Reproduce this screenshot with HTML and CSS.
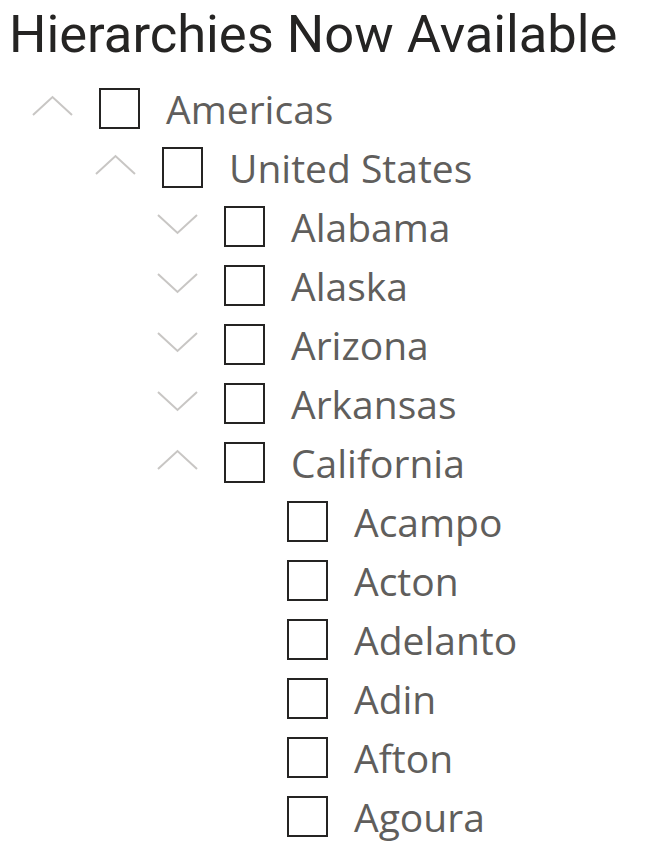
FILE: index.html
```html
<!DOCTYPE html>
<html lang="en">

<head>
    <meta charset="UTF-8">
    <title>Hierarchies Now Available</title>
    <link rel="stylesheet" href="styles.css">
</head>

<body>
    <h1 class="title">Hierarchies Now Available</h1>

    <div class="tree">
        <div class="node level-0">
            <svg class="chevron" viewBox="0 0 41 22"><polyline points="1,20 20.5,2 40,20" /></svg>
            <span class="box"></span>
            <span class="label">Americas</span>
        </div>
        <div class="node level-1">
            <svg class="chevron" viewBox="0 0 41 22"><polyline points="1,20 20.5,2 40,20" /></svg>
            <span class="box"></span>
            <span class="label">United States</span>
        </div>
        <div class="node level-2">
            <svg class="chevron" viewBox="0 0 41 22"><polyline points="1,2 20.5,20 40,2" /></svg>
            <span class="box"></span>
            <span class="label">Alabama</span>
        </div>
        <div class="node level-2">
            <svg class="chevron" viewBox="0 0 41 22"><polyline points="1,2 20.5,20 40,2" /></svg>
            <span class="box"></span>
            <span class="label">Alaska</span>
        </div>
        <div class="node level-2">
            <svg class="chevron" viewBox="0 0 41 22"><polyline points="1,2 20.5,20 40,2" /></svg>
            <span class="box"></span>
            <span class="label">Arizona</span>
        </div>
        <div class="node level-2">
            <svg class="chevron" viewBox="0 0 41 22"><polyline points="1,2 20.5,20 40,2" /></svg>
            <span class="box"></span>
            <span class="label">Arkansas</span>
        </div>
        <div class="node level-2">
            <svg class="chevron" viewBox="0 0 41 22"><polyline points="1,20 20.5,2 40,20" /></svg>
            <span class="box"></span>
            <span class="label">California</span>
        </div>
        <div class="node level-3">
            <span class="chevron"></span>
            <span class="box"></span>
            <span class="label">Acampo</span>
        </div>
        <div class="node level-3">
            <span class="chevron"></span>
            <span class="box"></span>
            <span class="label">Acton</span>
        </div>
        <div class="node level-3">
            <span class="chevron"></span>
            <span class="box"></span>
            <span class="label">Adelanto</span>
        </div>
        <div class="node level-3">
            <span class="chevron"></span>
            <span class="box"></span>
            <span class="label">Adin</span>
        </div>
        <div class="node level-3">
            <span class="chevron"></span>
            <span class="box"></span>
            <span class="label">Afton</span>
        </div>
        <div class="node level-3">
            <span class="chevron"></span>
            <span class="box"></span>
            <span class="label">Agoura</span>
        </div>
    </div>
</body>

</html>
```

FILE: styles.css
```css
body {
    margin: 0;
    background: #ffffff;
    font-family: 'Open Sans', sans-serif;
}

.title {
    margin: 0;
    padding-left: 9px;
    height: 79px;
    line-height: 68px;
    font-family: Roboto, sans-serif;
    font-size: 52.5px;
    font-weight: 400;
    color: #252423;
}

.tree {
    display: flex;
    flex-direction: column;
}

.node {
    display: flex;
    align-items: center;
    height: 59px;
}

.level-0 { padding-left: 32px; }
.level-1 { padding-left: 95px; }
.level-2 { padding-left: 157px; }
.level-3 { padding-left: 220px; }

.chevron {
    flex: none;
    width: 41px;
    height: 22px;
    margin-right: 26px;
    margin-top: -5px;
}

.chevron polyline {
    fill: none;
    stroke: #c8c6c4;
    stroke-width: 2;
}

.box {
    flex: none;
    width: 41px;
    height: 41px;
    box-sizing: border-box;
    border: 2px solid #252423;
    margin-right: 26px;
}

.label {
    font-size: 39px;
    color: #605e5c;
    line-height: 1;
}
```
